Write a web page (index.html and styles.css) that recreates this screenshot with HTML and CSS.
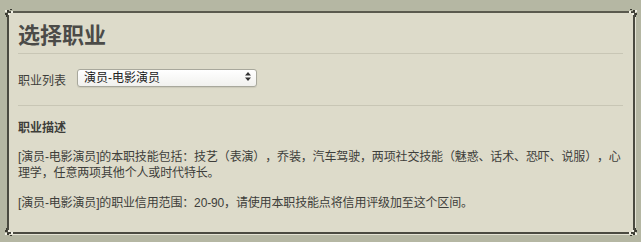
FILE: index.html
```html
<!DOCTYPE html>
<html lang="zh-CN">
<head>
    <meta charset="UTF-8">
    <title>选择职业</title>
    <link rel="stylesheet" href="styles.css">
</head>
<body>

    <!-- 职业选择面板 -->
    <div class="panel">
        <svg class="corner tl" width="10" height="10" viewBox="0 0 10 10"><path d="M1 5h2v2H1zM3 2h2v2H3zM5 4h2v1H5zM2 7h1v2H2zM6 1h2v1H6z" fill="#3a3a32"/><path d="M4 5h2v2H4zM1 2h2v2H1zM7 3h2v2H7z" fill="#f0efe4"/></svg>
        <svg class="corner tr" width="10" height="10" viewBox="0 0 10 10"><path d="M7 5h2v2H7zM5 2h2v2H5zM3 4h2v1H3zM7 7h1v2H7zM2 1h2v1H2z" fill="#3a3a32"/><path d="M4 5h2v2H4zM7 2h2v2H7zM1 3h2v2H1z" fill="#f0efe4"/></svg>
        <svg class="corner bl" width="10" height="10" viewBox="0 0 10 10"><path d="M1 3h2v2H1zM3 6h2v2H3zM5 5h2v1H5zM2 1h1v2H2zM6 8h2v1H6z" fill="#3a3a32"/><path d="M4 3h2v2H4zM1 6h2v2H1zM7 5h2v2H7z" fill="#f0efe4"/></svg>
        <svg class="corner br" width="10" height="10" viewBox="0 0 10 10"><path d="M7 3h2v2H7zM5 6h2v2H5zM3 5h2v1H3zM7 1h1v2H7zM2 8h2v1H2z" fill="#3a3a32"/><path d="M4 3h2v2H4zM7 6h2v2H7zM1 5h2v2H1z" fill="#f0efe4"/></svg>

        <h1 class="title">选择职业</h1>
        <hr class="line">

        <div class="pick-row">
            <label class="pick-label">职业列表</label>
            <div class="select-box">
                <select class="job-select">
                    <option>演员-电影演员</option>
                </select>
                <svg class="select-arrow" width="6" height="9" viewBox="0 0 6 9"><path d="M3 0L6 3.5H0z M3 9L6 5.5H0z" fill="#333"/></svg>
            </div>
        </div>
        <hr class="line">

        <h2 class="sub-title">职业描述</h2>
        <p class="desc">[演员-电影演员]的本职技能包括：技艺（表演），乔装，汽车驾驶，两项社交技能（魅惑、话术、恐吓、说服），心理学，任意两项其他个人或时代特长。</p>
        <p class="desc">[演员-电影演员]的职业信用范围：20-90，请使用本职技能点将信用评级加至这个区间。</p>
    </div>

</body>
</html>
```

FILE: styles.css
```css
* {
    margin: 0;
    padding: 0;
    box-sizing: border-box;
}
body {
    font-family: "Liberation Sans", "Noto Sans CJK SC", sans-serif;
    background-color: #b5b7a3;
    padding: 11px 6px 8px 7px;
    color: #3e3e3a;
}
.panel {
    position: relative;
    background-color: #dddbca;
    border: 2px solid #4a4a40;
    border-top-color: #5a5a4e;
    box-shadow: 1px 1px 0 #e4e3d4;
    padding: 10px 10px 21px 9px;
}
.corner {
    position: absolute;
}
.corner.tl { top: -5px; left: -5px; }
.corner.tr { top: -5px; right: -5px; }
.corner.bl { bottom: -5px; left: -5px; }
.corner.br { bottom: -5px; right: -5px; }
.title {
    font-size: 22px;
    line-height: 26px;
    font-weight: bold;
    color: #4b4b48;
}
.line {
    border: none;
    border-top: 1px solid #c8c6b5;
    margin-top: 4px;
}
.pick-row {
    display: flex;
    align-items: center;
    gap: 11px;
    margin-top: 14px;
    margin-bottom: 19px;
    height: 18px;
}
.pick-label {
    font-size: 12px;
    padding-top: 5px;
}
.select-box {
    position: relative;
    width: 180px;
    height: 18px;
}
.job-select {
    appearance: none;
    -webkit-appearance: none;
    width: 100%;
    height: 100%;
    font-family: inherit;
    font-size: 12px;
    color: #222;
    padding: 0 6px;
    border: 1px solid #a8a89c;
    border-radius: 3px;
    background: linear-gradient(#ffffff, #f1f1ee);
    box-shadow: 0 1px 1px rgba(0, 0, 0, 0.08);
}
.select-arrow {
    position: absolute;
    right: 6px;
    top: 4px;
}
.sub-title {
    font-size: 12px;
    line-height: 16px;
    font-weight: bold;
    margin-top: 14px;
    margin-bottom: 13px;
}
.desc {
    font-size: 12px;
    line-height: 16px;
    margin-bottom: 14px;
    text-spacing-trim: space-all;
    letter-spacing: -0.15px;
}
.desc:last-child {
    margin-bottom: 0;
}
```
